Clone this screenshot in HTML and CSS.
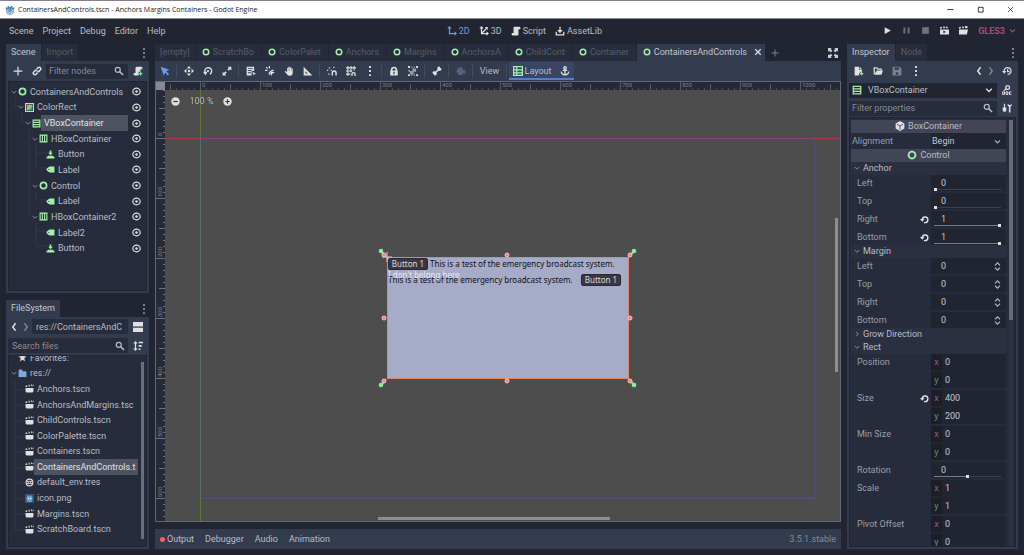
FILE: index.html
```html
<!DOCTYPE html>
<html lang="en">
<head>
    <meta charset="UTF-8">
    <meta name="viewport" content="width=device-width, initial-scale=1.0">
    <title>ContainersAndControls.tscn - Anchors Margins Containers - Godot Engine</title>
    <link rel="stylesheet" href="styles.css">
</head>
<body>
    <!-- icon set, 16x16 grid -->
    <svg class="sprite" aria-hidden="true">
        <symbol id="godot" viewBox="0 0 16 16"><path fill="#478cbf" d="M6 1l1 2h2l1-2 2 1v2l1 .6L14.500 3l1 2-1.500 2v5c0 2-3 3.500-6 3.500S2 14 2 12V7L.5 5l1-2L3 4.600 4 4V2z"/><circle cx="5" cy="9" r="1.800" fill="#fff"/><circle cx="11" cy="9" r="1.800" fill="#fff"/><circle cx="5" cy="9" r=".9" fill="#414042"/><circle cx="11" cy="9" r=".9" fill="#414042"/><path stroke="#fff" fill="none" d="M2 11.500l3 .5v1.500h2V12h2v1.500h2V12l3-.5"/></symbol>
        <symbol id="ring" viewBox="0 0 16 16"><circle cx="8" cy="8" r="5.500" fill="none" stroke="#a5efac" stroke-width="3"/></symbol>
        <symbol id="rectcolor" viewBox="0 0 16 16"><path fill="#a5efac" d="M0 0h16v16H0z"/><path fill="#262c3b" d="M2 2h12v12H2z"/><path fill="#ff7a52" d="M3 3h5L3 11z"/><path fill="#ffe15c" d="M8 3h3L4 13H3v-2z"/><path fill="#4ce085" d="M11 3h2v4l-5 6H4z"/><path fill="#3f8fe0" d="M13 7v6H8z"/></symbol>
        <symbol id="vbox" viewBox="0 0 16 16"><path fill="none" stroke="#a5efac" stroke-width="2" d="M2 2h12v12H2zM2 6h12M2 10h12"/></symbol>
        <symbol id="hbox" viewBox="0 0 16 16"><path fill="none" stroke="#a5efac" stroke-width="2" d="M2 2h12v12H2zM6 2v12M10 2v12"/></symbol>
        <symbol id="button" viewBox="0 0 16 16"><path fill="#a5efac" d="M6.500 1h3v4H12l-4 4.500L4 5h2.500zM3 10h10v2H3zM1 12h14v3H1z"/></symbol>
        <symbol id="label" viewBox="0 0 16 16"><path fill="#a5efac" fill-rule="evenodd" d="M6 2.500h9v11H6L1 9.500v-3zM5 7a1 1 0 100 2 1 1 0 000-2z"/></symbol>
        <symbol id="eye" viewBox="0 0 16 16"><ellipse cx="8" cy="8" rx="6.500" ry="5.800" fill="none" stroke="currentColor" stroke-width="2.200"/><circle cx="8" cy="8" r="2.300" fill="currentColor"/></symbol>
        <symbol id="down" viewBox="0 0 16 16"><path fill="none" stroke="currentColor" stroke-width="2" d="M3.500 6L8 10.500 12.500 6"/></symbol>
        <symbol id="right" viewBox="0 0 16 16"><path fill="none" stroke="currentColor" stroke-width="2" d="M6 3.500L10.500 8 6 12.500"/></symbol>
        <symbol id="prev" viewBox="0 0 16 16"><path fill="none" stroke="currentColor" stroke-width="2.400" d="M10.500 2L6 8l4.500 6"/></symbol>
        <symbol id="next" viewBox="0 0 16 16"><path fill="none" stroke="currentColor" stroke-width="2.400" d="M5.500 2L10 8l-4.500 6"/></symbol>
        <symbol id="plus" viewBox="0 0 16 16"><path fill="none" stroke="currentColor" stroke-width="2" d="M8 1v14M1 8h14"/></symbol>
        <symbol id="close" viewBox="0 0 16 16"><path fill="none" stroke="currentColor" stroke-width="2.500" d="M2.500 2.500l11 11M13.500 2.500l-11 11"/></symbol>
        <symbol id="dots" viewBox="0 0 16 16"><path fill="currentColor" d="M6.500 0h3v3h-3zM6.500 6.500h3v3h-3zM6.500 13h3v3h-3z"/></symbol>
        <symbol id="link" viewBox="0 0 16 16"><path fill="none" stroke="currentColor" stroke-width="2.300" d="M7 5.500l2.500-2.700a2.500 2.500 0 013.700 3.700L11 9 8.500 8M9 10.500l-2.500 2.700a2.500 2.500 0 01-3.700-3.700L5 7l2.500 1"/></symbol>
        <symbol id="search" viewBox="0 0 16 16"><circle cx="6" cy="6" r="4" fill="none" stroke="currentColor" stroke-width="2"/><path stroke="currentColor" stroke-width="2.500" d="M9 9l5.500 5.500"/></symbol>
        <symbol id="scriptadd" viewBox="0 0 16 16"><path fill="currentColor" d="M6 1h7a2 2 0 012 2v2h-3v4H9v6H3a2 2 0 01-2-2v-2h3V3a2 2 0 012-2z"/><path fill="#5fff97" d="M11 9h2v2h2v2h-2v2h-2v-2H9v-2h2z"/></symbol>
        <symbol id="script" viewBox="0 0 16 16"><path fill="currentColor" d="M6 1h7a2 2 0 012 2v2h-3v8a2 2 0 01-2 2H3a2 2 0 01-2-2v-2h3V3a2 2 0 012-2z"/></symbol>
        <symbol id="split" viewBox="0 0 16 16"><path fill="currentColor" d="M0 0h16v7H0zM0 9h16v7H0z"/></symbol>
        <symbol id="sort" viewBox="0 0 16 16"><path fill="currentColor" d="M4 0l3.500 4H5v8h2.500L4 16 .5 12H3V4H.5zM9 1h7v2.500H9zM9 6.500h5V9H9zM9 12h3v2.500H9z"/></symbol>
        <symbol id="star" viewBox="0 0 16 16"><path fill="currentColor" d="M8 1l2 4.700 5.200.4-4 3.400 1.300 5L8 11.800 3.500 14.500l1.300-5-4-3.400L6 5.700z"/></symbol>
        <symbol id="folder" viewBox="0 0 16 16"><path fill="#81a9e0" d="M1 3a2 2 0 012-2h3a2 2 0 012 2v1h5a2 2 0 012 2v8H1z"/></symbol>
        <symbol id="clap" viewBox="0 0 16 16"><path fill="currentColor" d="M1 7h14v6a2 2 0 01-2 2H3a2 2 0 01-2-2zM1 3l2.500-1 .8 3L1 5.500zM6 1.500l2-.3.800 3-2 .5zM10.500 1l2-.3.800 3-2 .5zM14 1h1v3h-1z"/></symbol>
        <symbol id="globe" viewBox="0 0 16 16"><circle cx="8" cy="8" r="6" fill="none" stroke="currentColor" stroke-width="2"/><path fill="none" stroke="currentColor" stroke-width="1.600" d="M2 6h12M2 10h12M6 6v4M10 6v4"/></symbol>
        <symbol id="image" viewBox="0 0 16 16"><path fill="#355570" d="M0 0h16v16H0z"/><path fill="#58a6dc" d="M3 4l2-2 2 1h2l2-1 2 2v8l-2 2H5l-2-2z"/><circle cx="6" cy="8" r="1.200" fill="#fff"/><circle cx="10" cy="8" r="1.200" fill="#fff"/></symbol>
        <symbol id="two" viewBox="0 0 16 16"><path fill="none" stroke="currentColor" stroke-width="2" d="M4 3v9h9"/><path fill="currentColor" d="M4 0l3.500 4h-7zM16 12l-4 3.500v-7z"/></symbol>
        <symbol id="three" viewBox="0 0 16 16"><path fill="none" stroke="currentColor" stroke-width="2" d="M4 3v9h9M4 12l8-8"/><path fill="currentColor" d="M4 0l3.500 4h-7zM16 12l-4 3.500v-7zM14 1.500v5l-5-5z"/></symbol>
        <symbol id="asset" viewBox="0 0 16 16"><path fill="none" stroke="currentColor" stroke-width="2" d="M8 1v8M2 9v5h12V9"/><path fill="currentColor" d="M3.500 6.500h9L8 11.500z"/></symbol>
        <symbol id="play" viewBox="0 0 16 16"><path fill="currentColor" d="M3 2l11 6-11 6z"/></symbol>
        <symbol id="pause" viewBox="0 0 16 16"><path fill="currentColor" d="M2.500 2.500H6v11H2.500zM10 2.500h3.500v11H10z"/></symbol>
        <symbol id="stop" viewBox="0 0 16 16"><path fill="currentColor" d="M2 2h12v12H2z"/></symbol>
        <symbol id="playscene" viewBox="0 0 16 16"><path fill="currentColor" fill-rule="evenodd" d="M0 6h16v9H0zM0 2l3-.8.8 3L0 4.800zM5.500 1h3l.5 3H6zM10.500 1h2.500l1 3h-3zM6 8v5l4.500-2.500z"/></symbol>
        <symbol id="playcustom" viewBox="0 0 16 16"><path fill="currentColor" d="M0 6h16l-2 9H0zM0 2l3-.8.8 3L0 4.800zM5.500 1h3l.5 3H6zM10.500 0H15v4h-4z"/></symbol>
        <symbol id="select" viewBox="0 0 16 16"><path fill="currentColor" d="M1 1l14 5-5 2.500 4.500 4.500-2 2L8.500 10.500 6 15z"/></symbol>
        <symbol id="move" viewBox="0 0 16 16"><path fill="currentColor" d="M8 0l3.500 4h-7zM8 16l-3.500-4h7zM0 8l4-3.500v7zM16 8l-4 3.500v-7z"/><circle cx="8" cy="8" r="2" fill="currentColor"/></symbol>
        <symbol id="rotate" viewBox="0 0 16 16"><path fill="none" stroke="currentColor" stroke-width="2.200" d="M4 11.500A5.500 5.500 0 1111 13"/><path fill="currentColor" d="M0 9h7l-3 6z"/><circle cx="8" cy="8" r="1.800" fill="currentColor"/></symbol>
        <symbol id="scale" viewBox="0 0 16 16"><path fill="currentColor" d="M9 1h6v6l-2-2-2.500 2.500-2-2L11 3zM7 15H1V9l2 2 2.500-2.500 2 2L5 13z"/></symbol>
        <symbol id="list" viewBox="0 0 16 16"><path fill="currentColor" fill-rule="evenodd" d="M1 1h12v7H9v7H1zM3 3v1.500h8V3zM3 6.500V8h6V6.500zM3 10v1.500h5V10zM10 9l6 3-2.500 1-1 2.500z"/></symbol>
        <symbol id="pivot" viewBox="0 0 16 16"><path fill="none" stroke="currentColor" stroke-width="2" d="M7 0v4M0 7h4M10 7h4M7 10v4M2 2l2 2"/><path fill="currentColor" d="M7 7l9 3.500-4 1.500-2 4z"/></symbol>
        <symbol id="hand" viewBox="0 0 16 16"><path fill="currentColor" d="M5 3h1.800v5H7V1h2v7h.4V2h2v6h.4V4H14v7c0 3-2 4.500-5 4.500-3 0-4-1.500-5-3.500L1 9l1.500-1.200L5 9.500z"/></symbol>
        <symbol id="measure" viewBox="0 0 16 16"><path fill="currentColor" fill-rule="evenodd" d="M1 1l14 14H1zM4 8.500V12h3.500z"/></symbol>
        <symbol id="snap" viewBox="0 0 16 16"><path fill="currentColor" d="M3 2h2v2H3zM0 6h2v2H0zM6 6h2v2H6zM2 12h2v2H2zM10 1h2v2h-2z"/><path fill="none" stroke="currentColor" stroke-width="2.300" d="M8.500 15v-4a3 3 0 016 0v4"/></symbol>
        <symbol id="grid" viewBox="0 0 16 16"><path fill="none" stroke="currentColor" stroke-width="1.700" d="M3 0v16M8 0v10M13 0v7M0 3h16M0 8h10M0 13h7"/><path fill="none" stroke="currentColor" stroke-width="2.200" d="M9.500 16v-3a2.500 2.500 0 015 0v3"/></symbol>
        <symbol id="lock" viewBox="0 0 16 16"><path fill="currentColor" fill-rule="evenodd" d="M3 7V6a5 5 0 0110 0v1h1v8H2V7zM5.500 7h5V6a2.500 2.500 0 00-5 0zM7 9v4h2V9z"/></symbol>
        <symbol id="group" viewBox="0 0 16 16"><path fill="currentColor" d="M0 0h3v3H0zM13 0h3v3h-3zM0 13h3v3H0zM13 13h3v3h-3zM5 1h2v1.500H5zM9 1h2v1.500H9zM5 13.500h2V15H5zM9 13.500h2V15H9zM1 6h1.500v3H1z"/><path fill="currentColor" opacity=".6" d="M7 4h6v5H7zM3 8h6v5H3z"/></symbol>
        <symbol id="bone" viewBox="0 0 16 16"><path fill="currentColor" d="M10.500 1a2.300 2.300 0 012.600 2 2.300 2.300 0 011 4.200 2.500 2.500 0 01-3.300-.2L7 10.800a2.500 2.500 0 01-1.500 4.200 2.300 2.300 0 01-2.600-2 2.300 2.300 0 01-1-4.200 2.500 2.500 0 013.300.2L9 5.200A2.500 2.500 0 0110.500 1z"/></symbol>
        <symbol id="camera" viewBox="0 0 16 16"><path fill="currentColor" d="M2 6a2.500 2.500 0 013-3 3.500 3.500 0 016 1.500v3L15 6v7l-4-2v3H3v-4H1V7z"/></symbol>
        <symbol id="layout" viewBox="0 0 16 16"><path fill="none" stroke="#a5efac" stroke-width="2" d="M1 1h14v14H1zM6 1v14M1 6h14M1 11h14"/></symbol>
        <symbol id="anchor" viewBox="0 0 16 16"><circle cx="8" cy="3" r="2" fill="none" stroke="currentColor" stroke-width="2"/><path fill="none" stroke="currentColor" stroke-width="2" d="M8 5v9M4.500 7h7M2 9c.5 3.500 2.500 5 6 5s5.500-1.500 6-5"/></symbol>
        <symbol id="expand" viewBox="0 0 16 16"><path fill="currentColor" d="M0 0h6L4.300 1.700 7 4.400 4.400 7 1.700 4.300 0 6zM16 0v6l-1.700-1.700L11.600 7 9 4.400l2.700-2.700L10 0zM0 16v-6l1.700 1.700L4.400 9 7 11.600l-2.700 2.700L6 16zM16 16h-6l1.700-1.700L9 11.600 11.600 9l2.700 2.700L16 10z"/></symbol>
        <symbol id="minuszoom" viewBox="0 0 16 16"><circle cx="8" cy="8" r="7.500" fill="currentColor"/><path stroke="#3a3a3a" stroke-width="2.200" d="M4 8h8"/></symbol>
        <symbol id="pluszoom" viewBox="0 0 16 16"><circle cx="8" cy="8" r="7.500" fill="currentColor"/><path stroke="#3a3a3a" stroke-width="2.200" d="M4 8h8M8 4v8"/></symbol>
        <symbol id="newres" viewBox="0 0 16 16"><path fill="currentColor" d="M1 1h7v5h5v3h-3v2H8v4H1zM9 1l4 4H9z"/><path fill="#5fff97" d="M11 9h2v2h2v2h-2v2h-2v-2H9v-2h2z"/></symbol>
        <symbol id="open" viewBox="0 0 16 16"><path fill="none" stroke="currentColor" stroke-width="2" d="M2 13V3h4l2 2h5v2"/><path fill="currentColor" d="M6 7h10l-2.500 7H2z"/></symbol>
        <symbol id="save" viewBox="0 0 16 16"><path fill="currentColor" fill-rule="evenodd" d="M1 1h11l3 3v11H1zM4 2.500V6h7V2.500zM6 10v4h4v-4z"/></symbol>
        <symbol id="history" viewBox="0 0 16 16"><path fill="none" stroke="currentColor" stroke-width="2" d="M3.500 9A5.500 5.500 0 119 13.500M9 5v4h3"/><path fill="currentColor" d="M0 8h7l-3.500 4.500z"/></symbol>
        <symbol id="docs" viewBox="0 0 16 16"><circle cx="9" cy="4" r="3" fill="none" stroke="currentColor" stroke-width="2"/><path stroke="currentColor" stroke-width="2" d="M7 6L3 9"/><path fill="none" stroke="currentColor" stroke-width="1.600" d="M1 11h3v4H1zM6.500 11h3v4h-3zM15 11h-3v4h3"/></symbol>
        <symbol id="tools" viewBox="0 0 16 16"><path fill="currentColor" d="M3 1h2v6h2v4a2.500 2.500 0 01-6 0V7h2zM9 1v3l2 2v9h2.500V6l2-2V1l-2 2h-2z"/></symbol>
        <symbol id="cube" viewBox="0 0 16 16"><path fill="currentColor" d="M8 0l7 4v8l-7 4-7-4V4z"/><path fill="none" stroke="#43475a" stroke-width="1.400" d="M3 5.200L8 8l5-2.800M8 8v6"/></symbol>
        <symbol id="revert" viewBox="0 0 16 16"><path fill="none" stroke="currentColor" stroke-width="2.400" d="M4 8a5 5 0 115 5.500H7"/><path fill="currentColor" d="M0 7h8l-4 5z"/></symbol>
        <symbol id="updown" viewBox="0 0 16 16"><path fill="none" stroke="currentColor" stroke-width="2" d="M3.500 6L8 1.500 12.500 6M3.500 10L8 14.500 12.500 10"/></symbol>
        <symbol id="winmin" viewBox="0 0 16 16"><path stroke="currentColor" stroke-width="2" d="M1 8h14"/></symbol>
        <symbol id="winmax" viewBox="0 0 16 16"><path fill="none" stroke="currentColor" stroke-width="2" d="M3 3h11v11H3z"/></symbol>
        <symbol id="winclose" viewBox="0 0 16 16"><path fill="none" stroke="currentColor" stroke-width="1.600" d="M2 2l12 12M14 2L2 14"/></symbol>
    </svg>

    <header class="titlebar">
        <svg class="icon"><use href="#godot"/></svg>
        <span class="title">ContainersAndControls.tscn - Anchors Margins Containers - Godot Engine</span>
        <button aria-label="Minimize"><svg class="win-icon"><use href="#winmin"/></svg></button>
        <button aria-label="Maximize"><svg class="win-icon"><use href="#winmax"/></svg></button>
        <button aria-label="Close"><svg class="win-icon"><use href="#winclose"/></svg></button>
    </header>

    <div class="menubar">
        <nav class="menus">
            <button>Scene</button>
            <button>Project</button>
            <button>Debug</button>
            <button>Editor</button>
            <button>Help</button>
        </nav>
        <div class="modes">
            <button class="active"><svg class="icon"><use href="#two"/></svg>2D</button>
            <button><svg class="icon"><use href="#three"/></svg>3D</button>
            <button><svg class="icon"><use href="#script"/></svg>Script</button>
            <button><svg class="icon"><use href="#asset"/></svg>AssetLib</button>
        </div>
        <div class="run">
            <button aria-label="Play"><svg class="icon"><use href="#play"/></svg></button>
            <button aria-label="Pause" disabled><svg class="icon"><use href="#pause"/></svg></button>
            <button aria-label="Stop" disabled><svg class="icon"><use href="#stop"/></svg></button>
            <button aria-label="Play scene"><svg class="icon"><use href="#playscene"/></svg></button>
            <button aria-label="Play custom scene"><svg class="icon"><use href="#playcustom"/></svg></button>
            <button class="renderer">GLES3<svg class="icon"><use href="#down"/></svg></button>
        </div>
    </div>

    <main class="workspace">
        <div class="column">
            <section class="dock">
                <div class="tabs">
                    <button class="tab active">Scene</button>
                    <button class="tab">Import</button>
                    <button class="tab-menu" aria-label="Dock options"><svg class="icon"><use href="#dots"/></svg></button>
                </div>
                <div class="panel">
                    <div class="dock-bar">
                        <button aria-label="Add node"><svg class="icon"><use href="#plus"/></svg></button>
                        <button aria-label="Instance scene"><svg class="icon"><use href="#link"/></svg></button>
                        <div class="search">
                            <input type="text" aria-label="Filter nodes" placeholder="Filter nodes">
                            <svg class="icon"><use href="#search"/></svg>
                        </div>
                        <button aria-label="Attach script"><svg class="icon"><use href="#scriptadd"/></svg></button>
                    </div>
                    <div class="tree">
                        <svg class="guides"><path d="M6 16v8h5M13 31v9h5M20 47v87h4M20 55h4M20 102h4M27 63v23h12M27 71h12M27 110v8h12M27 141v23h12M27 149h12"/></svg>
                        <ul class="rows nodes">
                            <li><svg class="arrow"><use href="#down"/></svg><svg class="icon"><use href="#ring"/></svg><span>ContainersAndControls</span><button aria-label="Toggle visibility"><svg class="icon"><use href="#eye"/></svg></button></li>
                            <li class="level-1"><svg class="arrow"><use href="#down"/></svg><svg class="icon"><use href="#rectcolor"/></svg><span>ColorRect</span><button aria-label="Toggle visibility"><svg class="icon"><use href="#eye"/></svg></button></li>
                            <li class="level-2 selected"><svg class="arrow"><use href="#down"/></svg><svg class="icon"><use href="#vbox"/></svg><span>VBoxContainer</span><button aria-label="Toggle visibility"><svg class="icon"><use href="#eye"/></svg></button></li>
                            <li class="level-3"><svg class="arrow"><use href="#down"/></svg><svg class="icon"><use href="#hbox"/></svg><span>HBoxContainer</span><button aria-label="Toggle visibility"><svg class="icon"><use href="#eye"/></svg></button></li>
                            <li class="level-4"><svg class="icon"><use href="#button"/></svg><span>Button</span><button aria-label="Toggle visibility"><svg class="icon"><use href="#eye"/></svg></button></li>
                            <li class="level-4"><svg class="icon"><use href="#label"/></svg><span>Label</span><button aria-label="Toggle visibility"><svg class="icon"><use href="#eye"/></svg></button></li>
                            <li class="level-3"><svg class="arrow"><use href="#down"/></svg><svg class="icon"><use href="#ring"/></svg><span>Control</span><button aria-label="Toggle visibility"><svg class="icon"><use href="#eye"/></svg></button></li>
                            <li class="level-4"><svg class="icon"><use href="#label"/></svg><span>Label</span><button aria-label="Toggle visibility"><svg class="icon"><use href="#eye"/></svg></button></li>
                            <li class="level-3"><svg class="arrow"><use href="#down"/></svg><svg class="icon"><use href="#hbox"/></svg><span>HBoxContainer2</span><button aria-label="Toggle visibility"><svg class="icon"><use href="#eye"/></svg></button></li>
                            <li class="level-4"><svg class="icon"><use href="#label"/></svg><span>Label2</span><button aria-label="Toggle visibility"><svg class="icon"><use href="#eye"/></svg></button></li>
                            <li class="level-4"><svg class="icon"><use href="#button"/></svg><span>Button</span><button aria-label="Toggle visibility"><svg class="icon"><use href="#eye"/></svg></button></li>
                        </ul>
                    </div>
                </div>
            </section>

            <section class="dock">
                <div class="tabs">
                    <button class="tab active">FileSystem</button>
                    <button class="tab-menu" aria-label="Dock options"><svg class="icon"><use href="#dots"/></svg></button>
                </div>
                <div class="panel">
                    <div class="dock-bar files-bar">
                        <button class="step" aria-label="Back"><svg class="icon"><use href="#prev"/></svg></button>
                        <button class="step dim" aria-label="Forward"><svg class="icon"><use href="#next"/></svg></button>
                        <div class="search"><input type="text" aria-label="Current path" value="res://ContainersAndC"></div>
                        <button aria-label="Toggle split mode"><svg class="icon"><use href="#split"/></svg></button>
                    </div>
                    <div class="dock-bar files-bar">
                        <div class="search">
                            <input type="text" aria-label="Search files" placeholder="Search files">
                            <svg class="icon"><use href="#search"/></svg>
                        </div>
                        <button aria-label="Sort files"><svg class="icon"><use href="#sort"/></svg></button>
                    </div>
                    <div class="tree">
                        <svg class="guides"><path d="M6 25v149M6 34h11M6 49h11M6 65h11M6 81h11M6 96h11M6 112h11M6 127h11M6 143h11M6 158h11M6 174h11"/></svg>
                        <ul class="rows files">
                            <li class="level-1"><svg class="icon"><use href="#star"/></svg><span>Favorites:</span></li>
                            <li><svg class="arrow"><use href="#down"/></svg><svg class="icon"><use href="#folder"/></svg><span>res://</span></li>
                            <li class="level-2"><svg class="icon"><use href="#clap"/></svg><span>Anchors.tscn</span></li>
                            <li class="level-2"><svg class="icon"><use href="#clap"/></svg><span>AnchorsAndMargins.tsc</span></li>
                            <li class="level-2"><svg class="icon"><use href="#clap"/></svg><span>ChildControls.tscn</span></li>
                            <li class="level-2"><svg class="icon"><use href="#clap"/></svg><span>ColorPalette.tscn</span></li>
                            <li class="level-2"><svg class="icon"><use href="#clap"/></svg><span>Containers.tscn</span></li>
                            <li class="level-2 selected"><svg class="icon"><use href="#clap"/></svg><span>ContainersAndControls.t</span></li>
                            <li class="level-2"><svg class="icon"><use href="#globe"/></svg><span>default_env.tres</span></li>
                            <li class="level-2"><svg class="icon"><use href="#image"/></svg><span>icon.png</span></li>
                            <li class="level-2"><svg class="icon"><use href="#clap"/></svg><span>Margins.tscn</span></li>
                            <li class="level-2"><svg class="icon"><use href="#clap"/></svg><span>ScratchBoard.tscn</span></li>
                        </ul>
                        <div class="scrollbar"></div>
                    </div>
                </div>
            </section>
        </div>

        <div class="column center">
            <section class="dock">
                <div class="tabs scene-tabs">
                    <button class="tab">[empty]</button>
                    <button class="tab"><svg class="icon"><use href="#ring"/></svg>ScratchBo</button>
                    <button class="tab"><svg class="icon"><use href="#ring"/></svg>ColorPalet</button>
                    <button class="tab"><svg class="icon"><use href="#ring"/></svg>Anchors</button>
                    <button class="tab"><svg class="icon"><use href="#ring"/></svg>Margins</button>
                    <button class="tab"><svg class="icon"><use href="#ring"/></svg>AnchorsA</button>
                    <button class="tab"><svg class="icon"><use href="#ring"/></svg>ChildCont</button>
                    <button class="tab"><svg class="icon"><use href="#ring"/></svg>Container</button>
                    <button class="tab active"><svg class="icon"><use href="#ring"/></svg>ContainersAndControls<svg class="icon close"><use href="#close"/></svg></button>
                    <button class="new-tab" aria-label="New scene"><svg class="icon"><use href="#plus"/></svg></button>
                    <button class="tab-menu expand" aria-label="Distraction free mode"><svg class="icon"><use href="#expand"/></svg></button>
                </div>
                <div class="toolbar">
                    <button class="on" aria-label="Select"><svg class="icon"><use href="#select"/></svg></button>
                    <i class="sep"></i>
                    <button aria-label="Move"><svg class="icon"><use href="#move"/></svg></button>
                    <button aria-label="Rotate"><svg class="icon"><use href="#rotate"/></svg></button>
                    <button aria-label="Scale"><svg class="icon"><use href="#scale"/></svg></button>
                    <i class="sep"></i>
                    <button aria-label="List select"><svg class="icon"><use href="#list"/></svg></button>
                    <button aria-label="Pivot"><svg class="icon"><use href="#pivot"/></svg></button>
                    <button aria-label="Pan"><svg class="icon"><use href="#hand"/></svg></button>
                    <button aria-label="Ruler"><svg class="icon"><use href="#measure"/></svg></button>
                    <i class="sep"></i>
                    <button aria-label="Smart snap"><svg class="icon"><use href="#snap"/></svg></button>
                    <button aria-label="Grid snap"><svg class="icon"><use href="#grid"/></svg></button>
                    <button aria-label="Snap options"><svg class="icon"><use href="#dots"/></svg></button>
                    <i class="sep"></i>
                    <button aria-label="Lock"><svg class="icon"><use href="#lock"/></svg></button>
                    <button aria-label="Group"><svg class="icon"><use href="#group"/></svg></button>
                    <i class="sep"></i>
                    <button aria-label="Skeleton"><svg class="icon"><use href="#bone"/></svg></button>
                    <i class="sep"></i>
                    <button class="off" aria-label="Camera override"><svg class="icon"><use href="#camera"/></svg></button>
                    <i class="sep"></i>
                    <button class="text">View</button>
                    <i class="sep"></i>
                    <div class="layout-tools">
                        <button><svg class="icon"><use href="#layout"/></svg>Layout</button>
                        <button aria-label="Anchor mode"><svg class="icon"><use href="#anchor"/></svg></button>
                    </div>
                </div>
                <div class="viewport">
                    <svg class="canvas">
                        <defs>
                            <pattern id="ticks-x" x="44" y="0" width="60" height="8" patternUnits="userSpaceOnUse">
                                <path stroke="#454b5b" d="M6.500 6v2M12.500 6v2M18.500 6v2M24.500 6v2M36.500 6v2M42.500 6v2M48.500 6v2M54.500 6v2"/>
                                <path stroke="#555b6b" d="M.5 0v8M30.500 2v6"/>
                            </pattern>
                            <pattern id="ticks-y" x="0" y="56" width="9" height="60" patternUnits="userSpaceOnUse">
                                <path stroke="#6a7080" d="M7 6.500h2M7 12.500h2M7 18.500h2M7 24.500h2M7 36.500h2M7 42.500h2M7 48.500h2M7 54.500h2"/>
                                <path stroke="#6a7080" d="M0 .5h9M3 30.500h6"/>
                            </pattern>
                        </defs>
                        <path class="axis-y" d="M44.500 0v2000"/>
                        <path class="axis-x" d="M0 56.500h3000"/>
                        <path class="page-left" d="M44.500 57v360"/>
                        <path class="page-top" d="M44 56.500h614"/>
                        <path class="page-edge" d="M658.500 57v359.500H45"/>
                        <rect class="ruler" width="100%" height="8"/>
                        <rect class="ruler" width="9" height="100%"/>
                        <rect x="9" width="100%" height="8" fill="url(#ticks-x)"/>
                        <rect y="8" width="9" height="100%" fill="url(#ticks-y)"/>
                        <rect width="9" height="8" fill="#858995"/>
                        <g class="marks">
                            <text x="46" y="5">0</text>
                            <text x="106" y="5">100</text>
                            <text x="166" y="5">200</text>
                            <text x="226" y="5">300</text>
                            <text x="286" y="5">400</text>
                            <text x="346" y="5">500</text>
                            <text x="406" y="5">600</text>
                            <text x="466" y="5">700</text>
                            <text x="526" y="5">800</text>
                            <text x="586" y="5">900</text>
                            <text x="646" y="5">1000</text>
                            <text transform="translate(6 54) rotate(-90)">0</text>
                            <text transform="translate(6 115) rotate(-90)">100</text>
                            <text transform="translate(6 175) rotate(-90)">200</text>
                            <text transform="translate(6 235) rotate(-90)">300</text>
                            <text transform="translate(6 295) rotate(-90)">400</text>
                            <text transform="translate(6 355) rotate(-90)">500</text>
                            <text transform="translate(6 415) rotate(-90)">600</text>
                        </g>
                    </svg>
                    <div class="zoom">
                        <button aria-label="Zoom out"><svg class="icon"><use href="#minuszoom"/></svg></button>
                        <button class="percent">100 %</button>
                        <button aria-label="Zoom in"><svg class="icon"><use href="#pluszoom"/></svg></button>
                    </div>
                    <div class="color-rect">
                        <div class="hbox"><button>Button 1</button><span>This is a test of the emergency broadcast system.</span></div>
                        <div class="stray">I don't belong here</div>
                        <div class="hbox"><span>This is a test of the emergency broadcast system.</span><button>Button 1</button></div>
                        <svg class="handles">
                            <path class="pivot" d="M10 5v10M5 10h10"/>
                            <g class="pins">
                                <path d="M10 11L5 3 3 5zM251 11l5-8 2 2zM10 131l-5 8-2-2zM251 131l5 8 2-2z"/>
                                <circle cx="4" cy="4" r="2.300"/><circle cx="257" cy="4" r="2.300"/>
                                <circle cx="4" cy="138" r="2.300"/><circle cx="257" cy="138" r="2.300"/>
                            </g>
                            <g class="dots">
                                <circle cx="7" cy="8" r="2"/><circle cx="130" cy="8" r="2"/><circle cx="253" cy="8" r="2"/>
                                <circle cx="7" cy="71" r="2"/><circle cx="253" cy="71" r="2"/>
                                <circle cx="7" cy="134" r="2"/><circle cx="130" cy="134" r="2"/><circle cx="253" cy="134" r="2"/>
                            </g>
                        </svg>
                    </div>
                    <div class="scroll-y"></div>
                    <div class="scroll-x"></div>
                </div>
            </section>
            <footer class="bottom-panel">
                <button class="output">Output</button>
                <button>Debugger</button>
                <button>Audio</button>
                <button>Animation</button>
                <span class="version">3.5.1.stable</span>
            </footer>
        </div>

        <section class="dock inspector">
            <div class="tabs">
                <button class="tab active">Inspector</button>
                <button class="tab">Node</button>
                <button class="tab-menu" aria-label="Dock options"><svg class="icon"><use href="#dots"/></svg></button>
            </div>
            <div class="panel">
                <div class="dock-bar">
                    <button aria-label="New resource"><svg class="icon"><use href="#newres"/></svg></button>
                    <button aria-label="Load resource"><svg class="icon"><use href="#open"/></svg></button>
                    <button class="dim" aria-label="Save resource"><svg class="icon"><use href="#save"/></svg></button>
                    <button aria-label="More"><svg class="icon"><use href="#dots"/></svg></button>
                    <button class="step push" aria-label="Previous object"><svg class="icon"><use href="#prev"/></svg></button>
                    <button class="step dim" aria-label="Next object"><svg class="icon"><use href="#next"/></svg></button>
                    <button aria-label="History"><svg class="icon"><use href="#history"/></svg></button>
                </div>
                <div class="dock-bar row">
                    <button class="object"><svg class="icon"><use href="#vbox"/></svg><span>VBoxContainer</span><svg class="icon"><use href="#down"/></svg></button>
                    <button aria-label="Open documentation"><svg class="icon"><use href="#docs"/></svg></button>
                </div>
                <div class="dock-bar row">
                    <div class="search">
                        <input type="text" aria-label="Filter properties" placeholder="Filter properties">
                        <svg class="icon"><use href="#search"/></svg>
                    </div>
                    <button aria-label="Property tools"><svg class="icon"><use href="#tools"/></svg></button>
                </div>
                <div class="properties">
                    <div class="list">
                        <div class="category"><svg class="icon"><use href="#cube"/></svg>BoxContainer</div>
                        <div class="prop align">
                            <label for="alignment">Alignment</label>
                            <div class="field"><select id="alignment"><option>Begin</option><option>Center</option><option>End</option></select><svg class="icon"><use href="#down"/></svg></div>
                        </div>
                        <div class="category"><svg class="icon"><use href="#ring"/></svg>Control</div>

                        <button class="section"><svg class="arrow"><use href="#down"/></svg>Anchor</button>
                        <div class="group">
                            <div class="prop"><label for="anchor-left">Left</label><div class="slider"><input type="text" id="anchor-left" value="0"><input type="range" aria-label="Anchor left" min="0" max="1" step="any" value="0"></div></div>
                            <div class="prop"><label for="anchor-top">Top</label><div class="slider"><input type="text" id="anchor-top" value="0"><input type="range" aria-label="Anchor top" min="0" max="1" step="any" value="0"></div></div>
                            <div class="prop"><label for="anchor-right">Right</label><button class="revert" aria-label="Revert"><svg class="icon"><use href="#revert"/></svg></button><div class="slider"><input type="text" id="anchor-right" value="1"><input type="range" class="full" aria-label="Anchor right" min="0" max="1" step="any" value="1"></div></div>
                            <div class="prop"><label for="anchor-bottom">Bottom</label><button class="revert" aria-label="Revert"><svg class="icon"><use href="#revert"/></svg></button><div class="slider"><input type="text" id="anchor-bottom" value="1"><input type="range" class="full" aria-label="Anchor bottom" min="0" max="1" step="any" value="1"></div></div>
                        </div>

                        <button class="section"><svg class="arrow"><use href="#down"/></svg>Margin</button>
                        <div class="group">
                            <div class="prop"><label for="margin-left">Left</label><div class="field"><input type="text" id="margin-left" value="0"><svg class="icon"><use href="#updown"/></svg></div></div>
                            <div class="prop"><label for="margin-top">Top</label><div class="field"><input type="text" id="margin-top" value="0"><svg class="icon"><use href="#updown"/></svg></div></div>
                            <div class="prop"><label for="margin-right">Right</label><div class="field"><input type="text" id="margin-right" value="0"><svg class="icon"><use href="#updown"/></svg></div></div>
                            <div class="prop"><label for="margin-bottom">Bottom</label><div class="field"><input type="text" id="margin-bottom" value="0"><svg class="icon"><use href="#updown"/></svg></div></div>
                        </div>

                        <button class="section"><svg class="arrow"><use href="#right"/></svg>Grow Direction</button>
                        <button class="section"><svg class="arrow"><use href="#down"/></svg>Rect</button>
                        <div class="group">
                            <div class="prop tall"><span class="name">Position</span><div class="vector"><label class="x" for="pos-x">x</label><input type="text" id="pos-x" value="0"><label class="y" for="pos-y">y</label><input type="text" id="pos-y" value="0"></div></div>
                            <div class="prop tall"><span class="name">Size</span><button class="revert" aria-label="Revert"><svg class="icon"><use href="#revert"/></svg></button><div class="vector"><label class="x" for="size-x">x</label><input type="text" id="size-x" value="400"><label class="y" for="size-y">y</label><input type="text" id="size-y" value="200"></div></div>
                            <div class="prop tall"><span class="name">Min Size</span><div class="vector"><label class="x" for="min-x">x</label><input type="text" id="min-x" value="0"><label class="y" for="min-y">y</label><input type="text" id="min-y" value="0"></div></div>
                            <div class="prop"><label for="rotation">Rotation</label><div class="slider"><input type="text" id="rotation" value="0"><input type="range" class="half" aria-label="Rotation" min="-360" max="360" value="0"></div></div>
                            <div class="prop tall"><span class="name">Scale</span><div class="vector"><label class="x" for="scale-x">x</label><input type="text" id="scale-x" value="1"><label class="y" for="scale-y">y</label><input type="text" id="scale-y" value="1"></div></div>
                            <div class="prop tall"><span class="name">Pivot Offset</span><div class="vector"><label class="x" for="pivot-x">x</label><input type="text" id="pivot-x" value="0"><label class="y" for="pivot-y">y</label><input type="text" id="pivot-y" value="0"></div></div>
                        </div>
                    </div>
                    <div class="track"><div class="thumb"></div></div>
                </div>
            </div>
        </section>
    </main>
</body>
</html>
```
FILE: styles.css
```css
* {
    box-sizing: border-box;
}

body {
    margin: 0;
    height: 100vh;
    display: flex;
    flex-direction: column;
    overflow: hidden;
    background-color: #202531;
    color: #b9bdc7;
    font-family: Roboto, "Noto Sans", sans-serif;
    font-size: 9px;
    line-height: 12px;
    border-top: 1px solid #85808c;
    border-bottom: 4px solid #221f2c;
}

button, input, select {
    font: inherit;
    color: inherit;
    background: none;
    border: 0;
    border-radius: 0;
    padding: 0;
    margin: 0;
    min-width: 0;
    outline: none;
}

button {
    display: flex;
    align-items: center;
    justify-content: center;
    white-space: nowrap;
}

.sprite {
    position: absolute;
    width: 0;
    height: 0;
}

.icon {
    width: 10px;
    height: 10px;
    flex: none;
    color: #e0e0e0;
}

.arrow {
    width: 8px;
    height: 8px;
    flex: none;
    color: #858a96;
}

/* window title */
.titlebar {
    height: 18px;
    flex: none;
    display: flex;
    align-items: center;
    gap: 3px;
    padding-left: 5px;
    background-color: #fff;
    color: #222;
    border-bottom: 1px solid #8a8d94;
    font-family: "Open Sans", sans-serif;
    font-size: 7px;
}

.title {
    flex: 1;
}

.titlebar button {
    width: 27px;
    height: 17px;
}

.win-icon {
    width: 7px;
    height: 7px;
    color: #222;
}

/* main menu */
.menubar {
    height: 25px;
    flex: none;
    display: flex;
    align-items: center;
    justify-content: space-between;
    padding: 0 7px 2px 9px;
}

.menus, .modes, .run {
    display: flex;
    align-items: center;
    gap: 9px;
}

.modes button {
    gap: 2px;
}

.modes .active, .modes .active .icon {
    color: #699ce8;
}

.run {
    gap: 10px;
}

.run button:disabled .icon {
    color: #6e727c;
}

.run .icon {
    width: 9px;
    height: 9px;
}

.run .renderer {
    gap: 3px;
    font-weight: bold;
    color: #a84a7b;
}

.run .renderer .icon {
    color: #a84a7b;
}

/* docks */
.workspace {
    flex: 1;
    min-height: 0;
    display: grid;
    grid-template-columns: 143px minmax(0, 1fr) 171px;
    gap: 6px;
    padding: 0 6px 2px;
}

.column {
    min-height: 0;
    display: flex;
    flex-direction: column;
    gap: 7px;
}

.dock {
    flex: 1 1 0;
    min-height: 0;
    display: flex;
    flex-direction: column;
}

.tabs {
    display: flex;
    gap: 1px;
    height: 17px;
    flex: none;
}

.tab {
    padding: 0 5px 2px;
    background-color: #262c3b;
    color: #565c6b;
}

.tab.active {
    background-color: #333b4f;
    color: #c3c7d0;
}

.tab-menu {
    width: 10px;
    margin-left: auto;
}

.tab-menu .icon {
    color: #868a94;
}

.panel {
    flex: 1;
    min-height: 0;
    display: flex;
    flex-direction: column;
    padding: 0 2px 2px;
    background-color: #333b4f;
}

.dock-bar {
    display: flex;
    align-items: center;
    height: 20px;
    flex: none;
}

.dock-bar button {
    width: 19px;
    height: 16px;
}

.dock-bar .step {
    width: 12px;
}

.dock-bar .push {
    margin-left: auto;
}

.dock-bar .dim .icon {
    color: #7c828f;
}

.search {
    flex: 1;
    min-width: 0;
    height: 15px;
    display: flex;
    align-items: center;
    padding: 0 4px 0 3px;
    background-color: #262c3b;
}

.search input {
    flex: 1;
    width: 0;
}

.search ::placeholder {
    color: #868b97;
    opacity: 1;
}

.search .icon {
    color: #b6bac3;
}

.files-bar {
    height: 19px;
}

.files-bar .search {
    padding: 0 3px 0 4px;
}

.tree {
    position: relative;
    flex: 1;
    min-height: 0;
    overflow: hidden;
    background-color: #262c3b;
    border: 1px solid #202531;
}

.guides {
    position: absolute;
    top: 0;
    left: 0;
    width: 100%;
    height: 100%;
    fill: none;
    stroke: #333947;
}

.rows {
    position: relative;
    display: grid;
    grid-auto-rows: 1fr;
    margin: 0;
    padding: 0 0 0 1px;
    list-style: none;
}

.nodes {
    height: 172px;
    margin-top: 2px;
}

.files {
    height: 187px;
    margin: -6px 8px 0 0;
}

.rows li {
    display: flex;
    align-items: center;
    min-width: 0;
}

.rows .icon {
    width: 9px;
    height: 9px;
}

.rows li > span {
    flex: 1;
    padding-left: 3px;
    height: 100%;
    display: flex;
    align-items: center;
    white-space: nowrap;
    overflow: hidden;
}

.rows li > button {
    width: 16px;
    margin-right: 2px;
}

.level-1 { padding-left: 7px; }
.level-2 { padding-left: 14px; }
.level-3 { padding-left: 21px; }
.level-4 { padding-left: 36px; }

.selected > span {
    background-color: #4e5361;
    color: #e0e2e7;
}

.files .level-1 { padding-left: 8px; }
.files .level-2 { padding-left: 15px; }

.scrollbar {
    position: absolute;
    top: 6px;
    right: 2px;
    bottom: 7px;
    width: 3px;
    background-color: #6b6f7b;
}

/* scene editor */
.scene-tabs .tab {
    gap: 3px;
    padding: 0 7px 2px 6px;
}

.scene-tabs .tab:first-child {
    padding: 0 5px 2px;
}

.scene-tabs .tab .icon {
    width: 8px;
    height: 8px;
}

.scene-tabs .tab .close {
    margin-left: 4px;
    margin-right: -4px;
}

.new-tab {
    width: 18px;
}

.new-tab .icon {
    width: 8px;
    height: 8px;
    color: #7c818d;
}

.expand {
    width: 16px;
}

.expand .icon {
    color: #c9ccd2;
}

.toolbar {
    height: 20px;
    flex: none;
    display: flex;
    align-items: center;
    background-color: #333b4f;
}

.toolbar button {
    width: 19px;
    height: 20px;
}

.toolbar .on .icon {
    color: #699ce8;
}

.toolbar .off .icon {
    color: #596080;
}

.toolbar .text {
    width: 29px;
}

.sep {
    width: 1px;
    height: 14px;
    margin: 0 2px;
    background-color: #444b5e;
}

.layout-tools {
    display: flex;
    height: 18px;
    background-color: #384664;
    box-shadow: inset 0 -2px #5680c2;
}

.toolbar .layout-tools button {
    height: 18px;
}

.toolbar .layout-tools button:first-child {
    width: 46px;
    gap: 2px;
}

.viewport {
    position: relative;
    flex: 1;
    min-height: 0;
    overflow: hidden;
    background-color: #4d4d4d;
    border: 1px solid #61687a;
}

.canvas {
    display: block;
    width: 100%;
    height: 100%;
    fill: none;
}

.axis-y { stroke: #5f7a2c; }
.axis-x { stroke: #a93a44; }
.page-left { stroke: #5a6e5e; }
.page-top { stroke: #87417f; }
.page-edge { stroke: #554f7e; }

.ruler {
    fill: #262a37;
}

.marks {
    fill: #7d828f;
    font-size: 6px;
}

.zoom {
    position: absolute;
    top: 13px;
    left: 15px;
    display: flex;
    align-items: center;
}

.zoom .icon {
    width: 9px;
    height: 9px;
}

.zoom .percent {
    width: 43px;
    color: #d0d0d0;
    text-shadow: 0 0 1px #000;
}

.color-rect {
    position: absolute;
    top: 175px;
    left: 231px;
    width: 242px;
    height: 122px;
    padding-right: 7px;
    background-color: #a6abc8;
    border: 1px solid #df8a66;
    color: #111;
    font-family: "Noto Sans", sans-serif;
    font-size: 8px;
}

.hbox {
    display: flex;
    align-items: center;
    gap: 2px;
    height: 12px;
    margin-bottom: 4px;
    white-space: nowrap;
}

.hbox button {
    width: 40px;
    height: 12px;
    border-radius: 2px;
    background-color: #3a3742;
    border: 1px solid #2a2830;
    color: #dcdcdc;
}

.hbox span + button {
    margin-left: auto;
}

.stray {
    position: absolute;
    top: 11px;
    left: 0;
    color: #e6e8f2;
}

.handles {
    position: absolute;
    top: -11px;
    left: -11px;
    width: 261px;
    height: 141px;
}

.pivot { stroke: #efc5c5; }
.pins { fill: #8eea9b; }
.dots { fill: #ff7a7a; stroke: #f2c6c6; }

.scroll-y, .scroll-x {
    position: absolute;
    background-color: #8e8e8e;
}

.scroll-y {
    top: 31%;
    right: 2px;
    width: 3px;
    height: 35%;
}

.scroll-x {
    left: 222px;
    right: 230px;
    bottom: 1px;
    height: 3px;
}

.bottom-panel {
    height: 20px;
    flex: none;
    display: flex;
    align-items: center;
    gap: 11px;
    padding: 0 5px;
    background-color: #333b4f;
}

.output::before {
    content: "";
    width: 5px;
    height: 5px;
    margin-right: 2px;
    border-radius: 50%;
    background-color: #ff5d5d;
}

.version {
    margin-left: auto;
    color: #858b99;
}

/* inspector */
.dock-bar.row {
    height: 18px;
}

.dock-bar .object {
    flex: 1;
    height: 15px;
    padding: 0 3px;
    background-color: #202531;
}

.object span {
    flex: 1;
    padding-left: 6px;
    text-align: left;
}

.properties {
    flex: 1;
    min-height: 0;
    display: flex;
    gap: 3px;
    padding: 2px 1px 0;
    overflow: hidden;
    background-color: #262c3b;
    border: 1px solid #202531;
}

.list {
    flex: 1;
    height: 0;
}

.track {
    width: 4px;
    margin-right: 1px;
    background-color: #2d3342;
}

.thumb {
    height: 47%;
    background-color: #666b77;
}

.category {
    display: flex;
    align-items: center;
    justify-content: center;
    gap: 3px;
    height: 13px;
    padding-bottom: 1px;
    background-color: #414555;
}

.section {
    width: 100%;
    height: 13px;
    justify-content: flex-start;
    gap: 2px;
    padding: 0 0 1px 2px;
    background-color: #2b3040;
}

.group {
    display: grid;
    gap: 2px;
}

.prop {
    display: grid;
    grid-template-columns: 69px 11px minmax(0, 1fr);
    height: 16px;
    align-items: start;
    line-height: 16px;
    color: #9a9fab;
}

.prop.tall {
    height: 34px;
}

.prop > label, .prop > .name {
    grid-column: 1;
    padding-left: 6px;
}

.prop.align > label {
    padding-left: 1px;
}

.field, .slider, .vector {
    grid-column: 3;
    color: #c3c7d0;
    background-color: #202531;
}

.revert {
    grid-column: 2;
    height: 16px;
    justify-content: flex-start;
}

.revert .icon {
    width: 9px;
    height: 9px;
}

.field {
    display: flex;
    align-items: center;
    height: 16px;
    padding-right: 4px;
}

.field input, .field select {
    flex: 1;
    width: 0;
    height: 16px;
    padding-left: 10px;
}

.field .icon {
    width: 9px;
    height: 9px;
    color: #b6bac3;
}

.field select {
    appearance: none;
    padding-left: 1px;
}

.slider {
    display: flex;
    flex-direction: column;
    height: 16px;
}

.slider input[type="text"] {
    height: 13px;
    padding: 3px 0 0 10px;
    line-height: 10px;
}

.slider input[type="range"] {
    appearance: none;
    height: 3px;
    margin: 0 5px 0 3px;
    background: linear-gradient(#3d414c, #3d414c) center / 100% 1px no-repeat;
}

.slider input[type="range"]::-webkit-slider-thumb {
    appearance: none;
    width: 3px;
    height: 3px;
    background-color: #e0e0e0;
}

.slider input.full {
    background-image: linear-gradient(#7b7e87, #7b7e87);
}

.slider input.half {
    background-image: linear-gradient(90deg, #7b7e87 50%, #3d414c 50%);
}

.vector {
    display: grid;
    grid-template-columns: 11px minmax(0, 1fr);
    row-gap: 2px;
    height: 34px;
}

.vector label {
    height: 16px;
    background-color: #1c1f2a;
    text-align: center;
}

.vector input {
    height: 16px;
    padding-left: 3px;
}

.vector .x { color: #93625e; }
.vector .y { color: #5b9a63; }
```
